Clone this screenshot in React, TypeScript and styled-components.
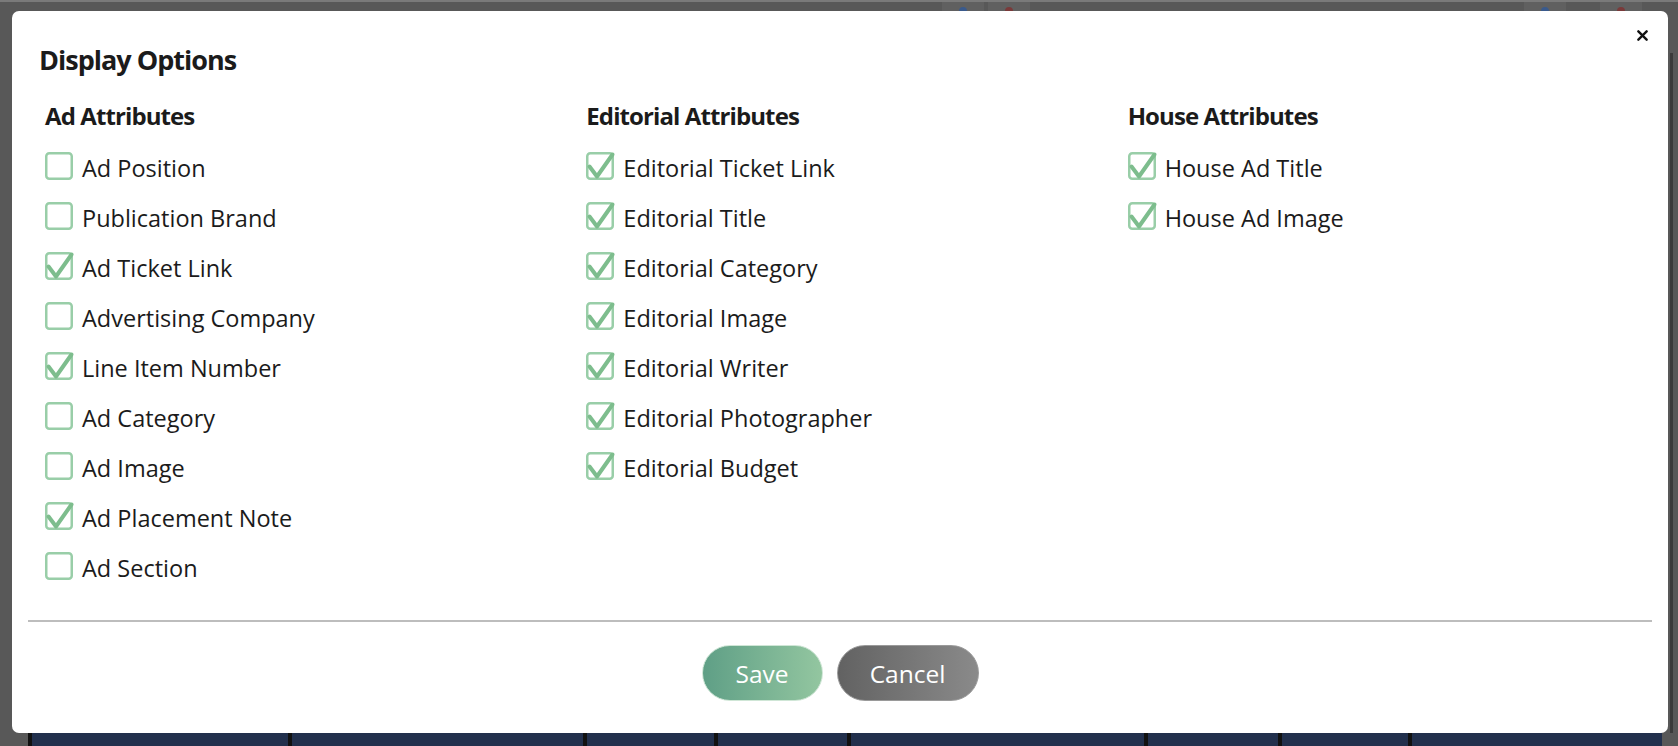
import React from "react";
import styled, { createGlobalStyle } from "styled-components";

const GlobalStyle = createGlobalStyle`
  html, body { margin: 0; padding: 0; }
  body {
    background: #585858;
    font-family: "Open Sans", "Noto Sans", sans-serif;
    -webkit-font-smoothing: antialiased;
  }
  * { box-sizing: border-box; }
`;

const Page = styled.div`
  width: 1678px;
  height: 746px;
  overflow: hidden;
  display: flex;
  flex-direction: column;
  background: #585858;
`;

const TopStrip = styled.div`
  height: 11px;
  flex: none;
  display: flex;
  border-top: 2px solid #7a7a7a;
  padding-left: 942px;
  gap: 4px;
`;

const TopCell = styled.div<{ $w: number; $ml?: number }>`
  width: ${(p) => p.$w}px;
  margin-left: ${(p) => p.$ml ?? 0}px;
  height: 9px;
  background: #606060;
  display: flex;
  justify-content: center;
  align-items: flex-end;
`;

const TopDot = styled.span<{ $c: string }>`
  width: 8px;
  height: 4px;
  border-radius: 4px 4px 0 0;
  background: ${(p) => p.$c};
`;

const Middle = styled.div`
  flex: 1;
  display: flex;
  padding-left: 12px;
`;

const Gutter = styled.div`
  flex: 1;
  display: flex;
  justify-content: center;
  padding-top: 42px;
`;

const GutterLine = styled.div`
  width: 3px;
  background: #3a3a3a;
  margin-left: -4px;
`;

const Modal = styled.div`
  width: 1656px;
  height: 722px;
  background: #ffffff;
  border-radius: 7px;
  padding: 0 16px;
  display: flex;
  flex-direction: column;
  color: #1b1b1b;
`;

const Header = styled.div`
  display: flex;
  justify-content: space-between;
  align-items: flex-start;
  padding: 0 0 0 11px;
`;

const Title = styled.h1`
  margin: 32px 0 0;
  font-size: 27px;
  line-height: 34px;
  font-weight: 700;
  letter-spacing: -1px;
`;

const Close = styled.button`
  margin: 17px 3px 0 0;
  width: 14px;
  height: 14px;
  padding: 0;
  border: none;
  background: transparent;
  display: flex;
  align-items: center;
  justify-content: center;
  cursor: pointer;
`;

const Columns = styled.div`
  display: grid;
  grid-template-columns: repeat(3, 1fr);
  margin-top: 24px;
`;

const Column = styled.div`
  padding: 0 15px 0 17px;
  display: flex;
  flex-direction: column;
`;

const Heading = styled.h2`
  margin: 0 0 21px;
  font-size: 24px;
  line-height: 30px;
  font-weight: 700;
  letter-spacing: -0.9px;
`;

const List = styled.div`
  display: flex;
  flex-direction: column;
  gap: 22px;
`;

const Row = styled.label`
  display: flex;
  align-items: flex-start;
  gap: 9px;
  height: 28px;
  cursor: pointer;
`;

const Label = styled.span`
  font-size: 23.5px;
  line-height: 28px;
  padding-top: 2px;
  font-weight: 400;
  color: #1b1b1b;
  white-space: nowrap;
`;

const BoxSvg = styled.svg`
  flex: none;
  width: 28px;
  height: 28px;
  overflow: visible;
`;

const Divider = styled.hr`
  margin: 40px 0 0;
  border: none;
  border-top: 2px solid #bdbdbd;
  height: 0;
`;

const Footer = styled.div`
  display: flex;
  justify-content: center;
  gap: 14px;
  margin-top: 23px;
`;

const Pill = styled.button<{ $variant: "save" | "cancel" }>`
  height: 56px;
  width: ${(p) => (p.$variant === "save" ? 121 : 142)}px;
  border-radius: 28px;
  border: 1px solid ${(p) => (p.$variant === "save" ? "#cfe6d6" : "#9a9a9a")};
  background: ${(p) =>
    p.$variant === "save"
      ? "linear-gradient(90deg, #5f9f86 0%, #93c6a0 100%)"
      : "linear-gradient(90deg, #626262 0%, #8a8a8a 100%)"};
  color: #ffffff;
  font-family: "Open Sans", "Noto Sans", sans-serif;
  font-size: 24.5px;
  font-weight: 400;
  padding: 0;
  cursor: pointer;
`;

const BottomStrip = styled.div`
  height: 13px;
  flex: none;
  display: flex;
  padding-left: 28px;
  padding-right: 12px;
`;

const BottomCell = styled.div<{ $w: number }>`
  width: ${(p) => p.$w}px;
  flex: none;
  background: #22304d;
  border-left: 4px solid #111111;
`;

const Checkbox: React.FC<{ checked: boolean }> = ({ checked }) => (
  <BoxSvg viewBox="0 0 28 28">
    <rect x="1.25" y="1.25" width="25.5" height="25.5" rx="3" fill="#ffffff" stroke="#99cea8" strokeWidth="2.5" />
    {checked && (
      <path
        d="M3.5 14.5 L11 24.5 L26.5 2.5"
        fill="none"
        stroke="#7dbd8d"
        strokeWidth="4"
        strokeLinecap="round"
        strokeLinejoin="round"
      />
    )}
  </BoxSvg>
);

type Item = { label: string; checked: boolean };
type Group = { title: string; items: Item[] };

const groups: Group[] = [
  {
    title: "Ad Attributes",
    items: [
      { label: "Ad Position", checked: false },
      { label: "Publication Brand", checked: false },
      { label: "Ad Ticket Link", checked: true },
      { label: "Advertising Company", checked: false },
      { label: "Line Item Number", checked: true },
      { label: "Ad Category", checked: false },
      { label: "Ad Image", checked: false },
      { label: "Ad Placement Note", checked: true },
      { label: "Ad Section", checked: false },
    ],
  },
  {
    title: "Editorial Attributes",
    items: [
      { label: "Editorial Ticket Link", checked: true },
      { label: "Editorial Title", checked: true },
      { label: "Editorial Category", checked: true },
      { label: "Editorial Image", checked: true },
      { label: "Editorial Writer", checked: true },
      { label: "Editorial Photographer", checked: true },
      { label: "Editorial Budget", checked: true },
    ],
  },
  {
    title: "House Attributes",
    items: [
      { label: "House Ad Title", checked: true },
      { label: "House Ad Image", checked: true },
    ],
  },
];

const bottomCells = [260, 295, 131, 133, 297, 134, 130, 254];

export default function App() {
  return (
    <>
      <GlobalStyle />
      <Page>
        <TopStrip>
          <TopCell $w={42}>
            <TopDot $c="#3a5a8c" />
          </TopCell>
          <TopCell $w={42}>
            <TopDot $c="#7a3a3a" />
          </TopCell>
          <TopCell $w={42} $ml={490}>
            <TopDot $c="#3a5a8c" />
          </TopCell>
          <TopCell $w={42} $ml={30}>
            <TopDot $c="#7a3a3a" />
          </TopCell>
        </TopStrip>
        <Middle>
          <Modal>
            <Header>
              <Title>Display Options</Title>
              <Close aria-label="Close">
                <svg width="11" height="11" viewBox="0 0 12 12">
                  <path d="M1.5 1.5 L10.5 10.5 M10.5 1.5 L1.5 10.5" stroke="#111" strokeWidth="2.6" strokeLinecap="round" />
                </svg>
              </Close>
            </Header>
            <Columns>
              {groups.map((g) => (
                <Column key={g.title}>
                  <Heading>{g.title}</Heading>
                  <List>
                    {g.items.map((it) => (
                      <Row key={it.label}>
                        <Checkbox checked={it.checked} />
                        <Label>{it.label}</Label>
                      </Row>
                    ))}
                  </List>
                </Column>
              ))}
            </Columns>
            <Divider />
            <Footer>
              <Pill $variant="save">Save</Pill>
              <Pill $variant="cancel">Cancel</Pill>
            </Footer>
          </Modal>
          <Gutter>
            <GutterLine />
          </Gutter>
        </Middle>
        <BottomStrip>
          {bottomCells.map((w, i) => (
            <BottomCell key={i} $w={w} />
          ))}
        </BottomStrip>
      </Page>
    </>
  );
}
